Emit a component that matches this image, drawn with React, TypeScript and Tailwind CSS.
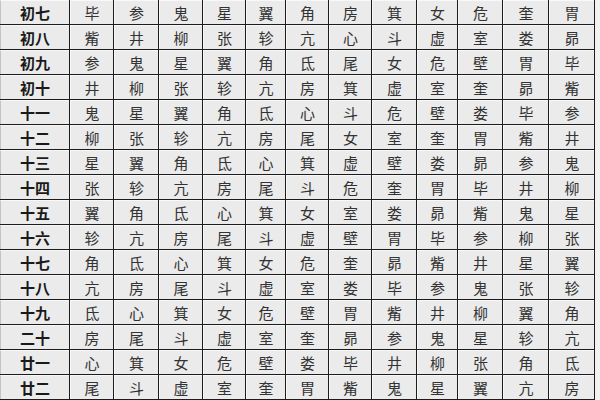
const rows: [string, string][] = [
  ['初七', '毕参鬼星翼角房箕女危奎胃'],
  ['初八', '觜井柳张轸亢心斗虚室娄昴'],
  ['初九', '参鬼星翼角氐尾女危壁胃毕'],
  ['初十', '井柳张轸亢房箕虚室奎昴觜'],
  ['十一', '鬼星翼角氐心斗危壁娄毕参'],
  ['十二', '柳张轸亢房尾女室奎胃觜井'],
  ['十三', '星翼角氐心箕虚壁娄昴参鬼'],
  ['十四', '张轸亢房尾斗危奎胃毕井柳'],
  ['十五', '翼角氐心箕女室娄昴觜鬼星'],
  ['十六', '轸亢房尾斗虚壁胃毕参柳张'],
  ['十七', '角氐心箕女危奎昴觜井星翼'],
  ['十八', '亢房尾斗虚室娄毕参鬼张轸'],
  ['十九', '氐心箕女危壁胃觜井柳翼角'],
  ['二十', '房尾斗虚室奎昴参鬼星轸亢'],
  ['廿一', '心箕女危壁娄毕井柳张角氐'],
  ['廿二', '尾斗虚室奎胃觜鬼星翼亢房'],
];

export default function App() {
  return (
    <div
      className="w-[600px] h-[400px] overflow-hidden bg-[#f2f2f2]"
      style={{ fontFamily: '"Noto Sans CJK SC", "Noto Sans", sans-serif' }}
    >
      <div className="w-[595px] grid grid-cols-[69px_43px_44px_43px_42px_39px_42px_42px_44px_40px_44px_45px_45px] gap-px pr-px pb-px bg-[#1c1c1c]">
        {rows.map(([day, stars]) => (
          <div key={day} className="contents">
            <div className="h-[24px] flex items-center justify-center bg-[#ebebeb] border-l border-[#c4c4c4] border-t border-t-[#f8f8f8] text-[15px] font-bold text-[#1a1a1a] leading-none">
              {day}
            </div>
            {Array.from(stars).map((s, i) => (
              <div
                key={i}
                className="h-[24px] flex items-center justify-center bg-[#ebebeb] border-t border-l border-[#f8f8f8] text-[15px] text-[#333333] leading-none"
              >
                {s}
              </div>
            ))}
          </div>
        ))}
      </div>
    </div>
  );
}
